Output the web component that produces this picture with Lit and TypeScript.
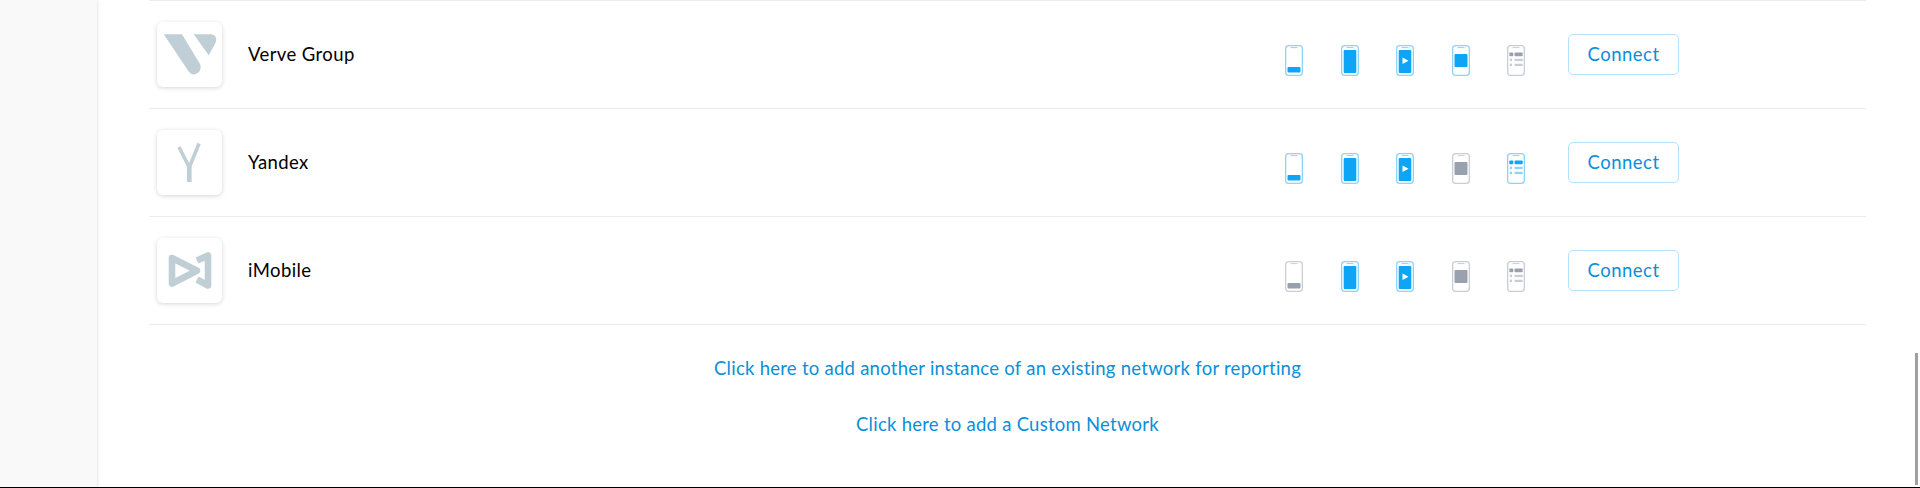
import { LitElement, html, css, svg } from "lit";
import { customElement } from "lit/decorators.js";

type Kind = "banner" | "full" | "video" | "inter" | "native";

const ICON_ORDER: Kind[] = ["banner", "full", "video", "inter", "native"];

const NETWORKS = [
  { name: "Verve Group", logo: "verve", on: [true, true, true, true, false] },
  { name: "Yandex", logo: "yandex", on: [true, true, true, false, true] },
  { name: "iMobile", logo: "imobile", on: [false, true, true, false, false] },
];

function adIcon(kind: Kind, active: boolean) {
  const stroke = active ? "#8fd3fb" : "#c9ced6";
  const fill = active ? "#0ea5f6" : "#9aa1ae";
  const soft = active ? "#8fd3fb" : "#c9ced6";
  let inner;
  if (kind === "banner") inner = svg`<rect x="2.5" y="22" width="13" height="5.5" rx="1" fill=${fill}></rect>`;
  if (kind === "full") inner = svg`<rect x="2.7" y="5" width="12.6" height="23" rx="1" fill=${fill}></rect>`;
  if (kind === "video")
    inner = svg`<rect x="2.7" y="5" width="12.6" height="23" rx="1" fill=${fill}></rect><path d="M6.5 12.5 L12.5 15.7 L6.5 19 Z" fill="#fff"></path>`;
  if (kind === "inter") inner = svg`<rect x="2.5" y="9" width="13" height="13" rx="1" fill=${fill}></rect>`;
  if (kind === "native")
    inner = svg`<rect x="2.3" y="7.6" width="4" height="3.6" rx="1" fill=${fill}></rect>
      <rect x="7.5" y="7.6" width="8.2" height="3.6" rx="1" fill=${fill}></rect>
      <rect x="2.6" y="13.6" width="2.6" height="2.6" rx="1.3" fill=${soft}></rect>
      <rect x="7.5" y="13.8" width="8.2" height="2.3" fill=${soft}></rect>
      <rect x="2.6" y="18.6" width="2.6" height="2.6" rx="1.3" fill=${soft}></rect>
      <rect x="7.5" y="18.8" width="8.2" height="2.3" fill=${soft}></rect>`;
  return html`<svg class="ad" width="18" height="31" viewBox="0 0 18 31">
    <rect x="0.65" y="0.65" width="16.7" height="29.7" rx="3" fill="#fff" stroke=${stroke} stroke-width="1.3"></rect>
    <path d="M5.5 2.6 H12.5" stroke=${stroke} stroke-width="1" fill="none"></path>
    ${inner}
  </svg>`;
}

function logo(kind: string) {
  const c = "#c0cfd6";
  if (kind === "verve")
    return html`<svg width="65" height="65" viewBox="0 0 65 65">
      <path d="M6.7 12.3 H25 L43 42 C45 47 42 52 37 52.5 C34 52.7 31.5 50 30 47 Z" fill=${c}></path>
      <path d="M36.7 12.3 H54 C58 12.3 60 16 59 19.5 C58 22.5 54 29 51.7 33.3 Z" fill=${c}></path>
    </svg>`;
  if (kind === "yandex")
    return html`<svg width="65" height="65" viewBox="0 0 65 65">
      <path d="M22 17 L32.3 37.5 L42 13.5" fill="none" stroke=${c} stroke-width="3.6"></path>
      <path d="M32.3 36 V52" fill="none" stroke=${c} stroke-width="4.6"></path>
    </svg>`;
  return html`<svg width="65" height="65" viewBox="0 0 65 65">
    <path d="M15 20 L40 32.7 L15 45.5 Z" fill="none" stroke=${c} stroke-width="6.6" stroke-linejoin="round"></path>
    <path d="M40 22.5 L51 17.5 V47.5 L40 41.5" fill="none" stroke=${c} stroke-width="6.6" stroke-linejoin="round"></path>
  </svg>`;
}

@customElement("app-root")
export class AppRoot extends LitElement {
  static styles = css`
    :host {
      display: block;
      height: 488px;
      overflow: hidden;
      font-family: "Lato", "Liberation Sans", sans-serif;
      background: #fff;
    }
    .page {
      position: relative;
      display: flex;
      height: 487px;
      border-bottom: 1px solid #000;
    }
    .side {
      width: 97px;
      flex: none;
      background: #f9f9f9;
      box-shadow: 1px 0 3px rgba(0, 0, 0, 0.1);
    }
    .main {
      flex: 1;
      padding: 0 54px 0 52px;
      min-width: 0;
    }
    .list {
      border-top: 1px solid #e9ebee;
    }
    .row {
      box-sizing: border-box;
      height: 108px;
      border-bottom: 1px solid #e9ebee;
      display: flex;
      align-items: center;
      padding: 0 187px 0 8px;
    }
    .logo {
      width: 65px;
      height: 65px;
      flex: none;
      border-radius: 6px;
      background: #fff;
      box-shadow: 0 1px 4px rgba(60, 70, 90, 0.22);
    }
    .logo svg,
    .ad {
      display: block;
    }
    .name {
      margin-left: 26px;
      padding-bottom: 2px;
      font-size: 18.5px;
      letter-spacing: 0.4px;
      color: #000;
    }
    .icons {
      margin-left: auto;
      padding-top: 12px;
      display: flex;
      gap: 37.5px;
    }
    .connect {
      box-sizing: border-box;
      margin-left: 43px;
      width: 111px;
      height: 41px;
      border: 1px solid #b5e2fb;
      border-radius: 5px;
      background: #fff;
      color: #0a8fd8;
      font: inherit;
      font-size: 18.5px;
      letter-spacing: 0.5px;
      padding: 0 0 2px;
    }
    .links {
      display: flex;
      flex-direction: column;
      align-items: center;
      gap: 34px;
      padding-top: 32px;
    }
    .links a {
      color: #0a8fd8;
      font-size: 18.5px;
      line-height: 22px;
      letter-spacing: 0.26px;
      text-decoration: none;
    }
    .thumb {
      position: absolute;
      right: 2px;
      top: 353px;
      width: 3px;
      height: 132px;
      background: #a0a0a0;
    }
  `;

  render() {
    return html`<div class="page">
      <div class="side"></div>
      <div class="main">
        <div class="list">
          ${NETWORKS.map(
            (n) => html`<div class="row">
              <div class="logo">${logo(n.logo)}</div>
              <div class="name">${n.name}</div>
              <div class="icons">${ICON_ORDER.map((k, i) => adIcon(k, n.on[i]))}</div>
              <button class="connect">Connect</button>
            </div>`
          )}
        </div>
        <div class="links">
          <a href="#">Click here to add another instance of an existing network for reporting</a>
          <a href="#">Click here to add a Custom Network</a>
        </div>
      </div>
      <div class="thumb"></div>
    </div>`;
  }
}
